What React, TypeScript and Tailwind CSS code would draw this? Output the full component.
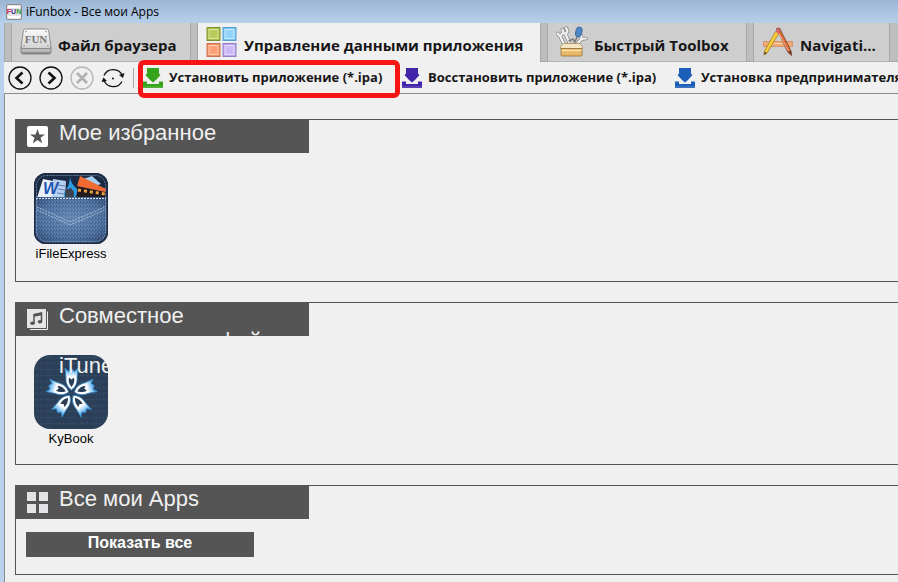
import type { ReactNode } from 'react';

function AppLogo() {
  return (
    <svg width="16" height="16" viewBox="0 0 16 16" className="shrink-0" aria-hidden="true">
      <rect x="0.5" y="0.5" width="15" height="15" rx="1.5" fill="#e4e4e4" stroke="#8b8b8b" />
      <path d="M2 3h12M2 13h12" stroke="#fff" strokeWidth="2" />
      <text x="8" y="10" textAnchor="middle" fontSize="7" fontWeight="900" fontFamily="Liberation Sans, sans-serif">
        <tspan fill="#c81e5a">F</tspan>
        <tspan fill="#3f2a8c">U</tspan>
        <tspan fill="#2f9a3a">N</tspan>
      </text>
    </svg>
  );
}

function DriveIcon() {
  return (
    <svg width="32" height="32" viewBox="0 0 32 32" className="shrink-0" aria-hidden="true">
      <defs>
        <linearGradient id="driveTop" x1="0" y1="0" x2="0" y2="1">
          <stop offset="0" stopColor="#fafafa" />
          <stop offset="1" stopColor="#d2d2d2" />
        </linearGradient>
        <linearGradient id="driveFront" x1="0" y1="0" x2="0" y2="1">
          <stop offset="0" stopColor="#8c8c8c" />
          <stop offset="0.5" stopColor="#c4c4c4" />
          <stop offset="1" stopColor="#777" />
        </linearGradient>
      </defs>
      <path d="M1 21h30v4.500q0 2.500-2.500 2.500h-25Q1 28 1 25.500z" fill="url(#driveFront)" stroke="#777" strokeWidth="0.800" />
      <path d="M5.500 3h21q1.800 0 2.100 1.800L31 20.500q0 2-2 2H3q-2 0-2-2L3.400 4.800Q3.700 3 5.500 3z" fill="url(#driveTop)" stroke="#8d8d8d" />
      <circle cx="6" cy="5.500" r="0.800" fill="#888" />
      <circle cx="26" cy="5.500" r="0.800" fill="#888" />
      <circle cx="4" cy="20" r="0.800" fill="#888" />
      <circle cx="28" cy="20" r="0.800" fill="#888" />
      <text x="16" y="17" textAnchor="middle" fontSize="11" fontWeight="bold" fontFamily="Liberation Serif, serif" fill="#777">
        FUN
      </text>
    </svg>
  );
}

function TilesIcon() {
  return (
    <svg width="32" height="32" viewBox="0 0 32 32" className="shrink-0" aria-hidden="true">
      <rect x="1" y="1.500" width="13" height="13" fill="#a9bd45" stroke="#7e9130" />
      <rect x="3" y="3.500" width="9" height="9" fill="#b9cb5c" stroke="#dbe6a0" />
      <rect x="17" y="1.500" width="13" height="13" fill="#74c2f2" stroke="#5a9fcd" />
      <rect x="19" y="3.500" width="9" height="9" fill="#92d3fa" stroke="#cdecff" />
      <rect x="1" y="17.500" width="13" height="13" fill="#f58a5c" stroke="#c97452" />
      <rect x="3" y="19.500" width="9" height="9" fill="#fa9f76" stroke="#fdd0b8" />
      <rect x="17" y="17.500" width="13" height="13" fill="#b9a2ee" stroke="#9380c4" />
      <rect x="19" y="19.500" width="9" height="9" fill="#cbb9f7" stroke="#e7defd" />
    </svg>
  );
}

function ToolboxIcon() {
  return (
    <svg width="32" height="32" viewBox="0 0 32 32" className="shrink-0" aria-hidden="true">
      <g fill="none" strokeLinecap="round" strokeLinejoin="round">
        <path d="M8 18 4 10M1.500 7.500 4 10l2.500-2.500M13.500 17l-4-9M6.500 3.500 7.500 7l3 .5 1-3-1.500-2.500M21 18l4.500-5M25 9l.5 4 4.500-.5" stroke="#858585" strokeWidth="3.600" />
        <path d="M8 18 4 10M1.500 7.500 4 10l2.500-2.500M13.500 17l-4-9M6.500 3.500 7.500 7l3 .5 1-3-1.500-2.500M21 18l4.500-5M25 9l.5 4 4.500-.5" stroke="#f2f2f2" strokeWidth="2.200" />
        <path d="m18 18 3.500-8M13 15l4-2 2 3" stroke="#7d7d7d" strokeWidth="1.600" />
      </g>
      <rect x="20" y="1" width="6" height="10" rx="3" fill="#4d86c4" stroke="#336299" strokeWidth="0.800" transform="rotate(12 23 5)" />
      <path d="m7.500 17.500-3 3v2h22v-2l-3-3z" fill="#f6e5c4" stroke="#a88d62" strokeWidth="0.800" />
      <path d="M5 22.500h21v6.500q0 1-1 1H6q-1 0-1-1z" fill="#e9b768" stroke="#96713a" strokeWidth="0.800" />
      <path d="M5.500 24.500h20" stroke="#fbe0a9" strokeWidth="1.500" />
    </svg>
  );
}

function NavigatorIcon() {
  return (
    <svg width="32" height="32" viewBox="0 0 32 32" className="shrink-0" aria-hidden="true">
      <rect x="1.500" y="15.500" width="29" height="5" fill="#efaa77" stroke="#cf8656" strokeWidth="0.700" />
      <path d="M6 17.500h20" stroke="#f9cba6" />
      <path d="m14.500 2.500 3-.5 11.500 23 .5 4.500-3.500-3z" fill="#e46a35" stroke="#70402e" strokeWidth="0.800" />
      <path d="m16 6 10.500 19" stroke="#f7b48f" />
      <path d="m26 25.500 3-1 .5 5z" fill="#704027" />
      <path d="M13.500 5.500 16 4l1 3L5 27l-3 2 .5-4z" fill="#f6cc38" stroke="#a87b22" strokeWidth="0.800" />
      <path d="m13.500 5.500 1.500-3 3 1.500-1.500 4z" fill="#d46871" />
      <path d="M2.500 25.500 2 29l3-2z" fill="#5e4837" />
    </svg>
  );
}

function InstallIcon({ color }: { color: string }) {
  return (
    <svg width="20" height="21" viewBox="0 0 20 21" className="shrink-0" aria-hidden="true">
      <path d="M4 1h12v5.500l1.500 1.500-4.500 5H7L2.500 8 4 6.500z" fill={color} />
      <path d="M0 14.500h4v2.500h12v-2.500h4V21H0z" fill={color} />
      <path d="M7 13h6l-3 2.500z" fill={color} />
      <path d="M0 20h20" stroke="#fff" strokeOpacity="0.250" />
    </svg>
  );
}

function StarBadge() {
  return (
    <svg width="21" height="21" viewBox="0 0 21 21" aria-hidden="true">
      <rect width="21" height="21" rx="2" fill="#fff" />
      <path d="m10.500 3 1.900 5.400h5.600l-4.500 3.400 1.700 5.500-4.700-3.300-4.700 3.300 1.700-5.500L3 8.400h5.600z" fill="#555" />
    </svg>
  );
}

function MusicBadge() {
  return (
    <svg width="21" height="21" viewBox="0 0 21 21" aria-hidden="true">
      <path d="M20.500 2.500v18H3" fill="none" stroke="#f0f0f0" />
      <rect width="19" height="19" fill="#e6e6e6" />
      <path d="M7 14V5.500L14.500 4v8.500" fill="none" stroke="#555" strokeWidth="1.500" />
      <path d="M7 6.500 14.500 5" stroke="#555" strokeWidth="2.500" />
      <ellipse cx="5.500" cy="14.200" rx="2.300" ry="1.800" fill="#555" />
      <ellipse cx="13" cy="12.700" rx="2.300" ry="1.800" fill="#555" />
    </svg>
  );
}

function GridBadge() {
  return (
    <svg width="21" height="21" viewBox="0 0 21 21" fill="#e4e4e6" aria-hidden="true">
      <path d="M0 0h9v9H0zM12 0h9v9h-9zM0 12h9v9H0zM12 12h9v9h-9z" />
    </svg>
  );
}

function PocketIcon() {
  return (
    <svg width="74" height="71" viewBox="0 0 74 71" aria-hidden="true">
      <defs>
        <clipPath id="pocketClip">
          <rect width="74" height="71" rx="12" />
        </clipPath>
        <radialGradient id="denim" cx="0.500" cy="0.450" r="0.700">
          <stop offset="0" stopColor="#6386b4" />
          <stop offset="0.600" stopColor="#486c9c" />
          <stop offset="1" stopColor="#243b61" />
        </radialGradient>
        <pattern id="weave" width="3" height="4" patternUnits="userSpaceOnUse">
          <path d="M0.500 0v2M2 2v2" stroke="#b7cbe6" strokeOpacity="0.350" strokeWidth="0.700" />
          <path d="M1.300 1v2" stroke="#142a50" strokeOpacity="0.400" strokeWidth="0.700" />
        </pattern>
      </defs>
      <g clipPath="url(#pocketClip)">
        <rect width="74" height="71" fill="#1a2a45" />
        <path d="m9 6 15 3-4 16H3z" fill="#e7eff9" />
        <path d="m19 6 13 2-1 18H18z" fill="#b9cfee" />
        <path d="m24 12 7 1M24 16l7 1M23 20l8 1" stroke="#5e7ec1" />
        <text x="9" y="21" fontSize="16" fontWeight="bold" fontStyle="italic" fontFamily="Liberation Sans, sans-serif" fill="#1e55b0">
          W
        </text>
        <path d="M36 3q0 7 7 13 3 6-2 10H31q-3-5 1-9 4-6 4-14z" fill="#2d9ce4" />
        <path d="m31 17 6-2 3 4v6h-9z" fill="#3b434f" />
        <path d="m49 6 9-3 9 8-6 2z" fill="#a7cff0" />
        <path d="m45 10 27 6v8H42z" fill="#211b20" />
        <path d="m46 3 26 13-1 3-28-6z" fill="#f06a32" />
        <path d="m44 17 27 4" stroke="#f1a03b" strokeWidth="3" strokeDasharray="3 3" />
        <path d="M0 24h74v47H0z" fill="url(#denim)" />
        <path d="M0 24h74v47H0z" fill="url(#weave)" />
        <path d="M2 25.500h70" stroke="#d4dfef" strokeDasharray="2 1" />
        <path d="m3 37 33 15 35-15M3 34l33 15 35-15" fill="none" stroke="#bccce2" strokeWidth="0.800" strokeDasharray="2 1" />
        <rect x="0.500" y="0.500" width="73" height="70" rx="12" fill="none" stroke="#1d2d4a" strokeWidth="2" />
        <rect x="2.500" y="2.500" width="69" height="66" rx="10" fill="none" stroke="#a9bad3" strokeWidth="0.800" strokeDasharray="2 1" strokeOpacity="0.700" />
      </g>
    </svg>
  );
}

function FlowerIcon() {
  return (
    <svg width="74" height="74" viewBox="0 0 74 74" aria-hidden="true">
      <defs>
        <linearGradient id="petal" x1="0" y1="0" x2="0" y2="1">
          <stop offset="0" stopColor="#2a8fdb" />
          <stop offset="0.200" stopColor="#8fcbf5" />
          <stop offset="0.400" stopColor="#fff" />
          <stop offset="1" stopColor="#fff" />
        </linearGradient>
        <pattern id="lines" width="23" height="6" patternUnits="userSpaceOnUse">
          <path d="M0 2.500h5M6 2.500h3M11 2.500h7M19 2.500h2" stroke="#4b6580" strokeOpacity="0.400" strokeWidth="1.500" strokeDasharray="1 0.600" />
        </pattern>
      </defs>
      <rect width="74" height="74" rx="16" fill="#2b4058" />
      <rect width="74" height="74" rx="16" fill="url(#lines)" />
      {[0, 72, 144, 216, 288].map((angle) => (
        <g key={angle} transform={`translate(37.500 38) rotate(${angle})`}>
          <path
            d="M0-3C-4-6-6-10-5.500-16L-6.500-25-3-21.500 0-24 3-21.500 6.500-25 5.500-16C6-10 4-6 0-3z"
            fill="url(#petal)"
            stroke="#3489ca"
            strokeWidth="0.800"
          />
          <path d="M0-6C-2.500-9-3.300-12-2.500-15.500L0-13.500 2.500-15.500C3.300-12 2.500-9 0-6z" fill="#2b4058" />
        </g>
      ))}
    </svg>
  );
}

function RoundButton({ label, disabled, children }: { label: string; disabled?: boolean; children: ReactNode }) {
  return (
    <button type="button" aria-label={label} disabled={disabled} className="size-6 shrink-0">
      <svg width="24" height="24" viewBox="0 0 24 24" fill="none" aria-hidden="true">
        {children}
      </svg>
    </button>
  );
}

type TabProps = { label: string; icon: ReactNode; active?: boolean; className: string };

function Tab({ label, icon, active, className }: TabProps) {
  return (
    <button
      type="button"
      role="tab"
      aria-selected={!!active}
      className={`flex shrink-0 items-center gap-1.5 border-b text-[15px] font-bold whitespace-nowrap ${
        active ? 'border-[#f0f0f0] bg-[#f0f0f0]' : 'border-[#b4b4b4] bg-[#cecece]'
      } ${className}`}
    >
      {icon}
      <span className="pt-1.5">{label}</span>
    </button>
  );
}

function TabGap() {
  return <div className="w-2 shrink-0 border-x border-b border-[#a6a6a6] bg-[#bebebe]" />;
}

function InstallButton({ label, color, className, marked }: { label: string; color: string; className?: string; marked?: boolean }) {
  return (
    <button type="button" className={`relative flex shrink-0 items-center gap-1.5 text-[13px] font-bold whitespace-nowrap ${className ?? ''}`}>
      <InstallIcon color={color} />
      {label}
      {marked && <span className="absolute -top-[7px] right-0.5 -bottom-2.5 -left-[5px] rounded-md border-5 border-[#f61414]" />}
    </button>
  );
}

function Section({ title, icon, className, children }: { title: string; icon: ReactNode; className: string; children: ReactNode }) {
  return (
    <section className={`border-y border-l border-[#555] ${className}`}>
      <div className="flex h-[33px] w-[293px] gap-[11px] bg-[#555] pl-[11px]">
        <div className="pt-1.5">{icon}</div>
        <h2 className="relative z-10 w-[250px] text-[22px] leading-[25px] text-[#f0f0f0]">{title}</h2>
      </div>
      {children}
    </section>
  );
}

function AppTile({ name, children }: { name: string; children: ReactNode }) {
  return (
    <a href="#" className="flex w-[74px] flex-col items-center text-[13px] leading-5 text-black">
      {children}
      {name}
    </a>
  );
}

export default function App() {
  return (
    <div className="flex min-h-screen flex-col overflow-hidden bg-[#b9d1ea] font-['Open_Sans',sans-serif] text-[#161616]">
      <header className="flex h-[23px] items-center gap-1 bg-linear-to-b from-[#9bb6d4] to-[#b7d0e9] pl-1.5 text-xs text-black">
        <AppLogo />
        <h1>iFunbox - Все мои Apps</h1>
      </header>

      <div className="ml-1 flex flex-1 flex-col bg-[#f0f0f0]">
        <div role="tablist" className="flex h-[39px] overflow-hidden">
          <TabGap />
          <Tab label="Файл браузера" icon={<DriveIcon />} className="w-[178px] pl-2" />
          <TabGap />
          <Tab label="Управление данными приложения" icon={<TilesIcon />} active className="w-[342px] pl-2" />
          <TabGap />
          <Tab label="Быстрый Toolbox" icon={<ToolboxIcon />} className="w-[198px] pl-2" />
          <TabGap />
          <Tab label="Navigati..." icon={<NavigatorIcon />} className="w-[135px] pl-2" />
          <div className="flex-1 border-b border-l border-[#a6a6a6] bg-[#bebebe]" />
        </div>

        <div className="flex h-8 items-center border-b border-[#8c8c8c] pl-1">
          <div className="flex shrink-0 gap-[7px]">
            <RoundButton label="Назад">
              <circle cx="12" cy="12" r="11" stroke="#111" strokeWidth="1.300" />
              <path d="m14.500 6.500-6 5.500 6 5.500" stroke="#111" strokeWidth="2.600" />
            </RoundButton>
            <RoundButton label="Вперёд">
              <circle cx="12" cy="12" r="11" stroke="#111" strokeWidth="1.300" />
              <path d="m9.500 6.500 6 5.500-6 5.500" stroke="#111" strokeWidth="2.600" />
            </RoundButton>
            <RoundButton label="Стоп" disabled>
              <circle cx="12" cy="12" r="11" stroke="#b5b5b5" strokeWidth="1.300" />
              <path d="m7 7 10 10M17 7 7 17" stroke="#b0b0b0" strokeWidth="2.800" />
            </RoundButton>
            <RoundButton label="Обновить">
              <path d="M3 9.500a10 10 0 0 1 18.500.5M21 15.500a10 10 0 0 1-18-1" stroke="#111" strokeWidth="1.300" />
              <path d="m23.500 7-1.500 5-4-3zM.5 16 2.500 11.500 6 15z" fill="#111" />
              <circle cx="12" cy="12.500" r="1" fill="#111" />
            </RoundButton>
          </div>
          <div className="mr-[9px] ml-2 h-5 w-px shrink-0 bg-[#a8a8a8]" />
          <div className="flex min-w-0 flex-1 items-center">
            <InstallButton label="Установить приложение (*.ipa)" color="#36a31c" className="w-[259px]" marked />
            <InstallButton label="Восстановить приложение (*.ipa)" color="#4224a8" className="w-[273px]" />
            <InstallButton label="Установка предпринимателя" color="#1d5fb8" />
          </div>
        </div>

        <main className="flex flex-1 flex-col gap-5 border-l border-[#8c8c8c] pt-[25px] pb-1.5 pl-2.5 font-['Liberation_Sans',sans-serif]">
          <Section title="Мое избранное" icon={<StarBadge />} className="h-[163px]">
            <div className="pt-5 pl-[18px]">
              <AppTile name="iFileExpress">
                <PocketIcon />
              </AppTile>
            </div>
          </Section>
          <Section title="Совместное использование файлов iTunes" icon={<MusicBadge />} className="h-[163px]">
            <div className="pt-[19px] pl-[18px]">
              <AppTile name="KyBook">
                <FlowerIcon />
              </AppTile>
            </div>
          </Section>
          <Section title="Все мои Apps" icon={<GridBadge />} className="h-[90px]">
            <div className="pt-3 pl-2.5">
              <button type="button" className="h-[25px] w-[228px] bg-[#555] pb-0.5 text-base leading-5 font-bold text-white">
                Показать все
              </button>
            </div>
          </Section>
        </main>
      </div>
    </div>
  );
}
